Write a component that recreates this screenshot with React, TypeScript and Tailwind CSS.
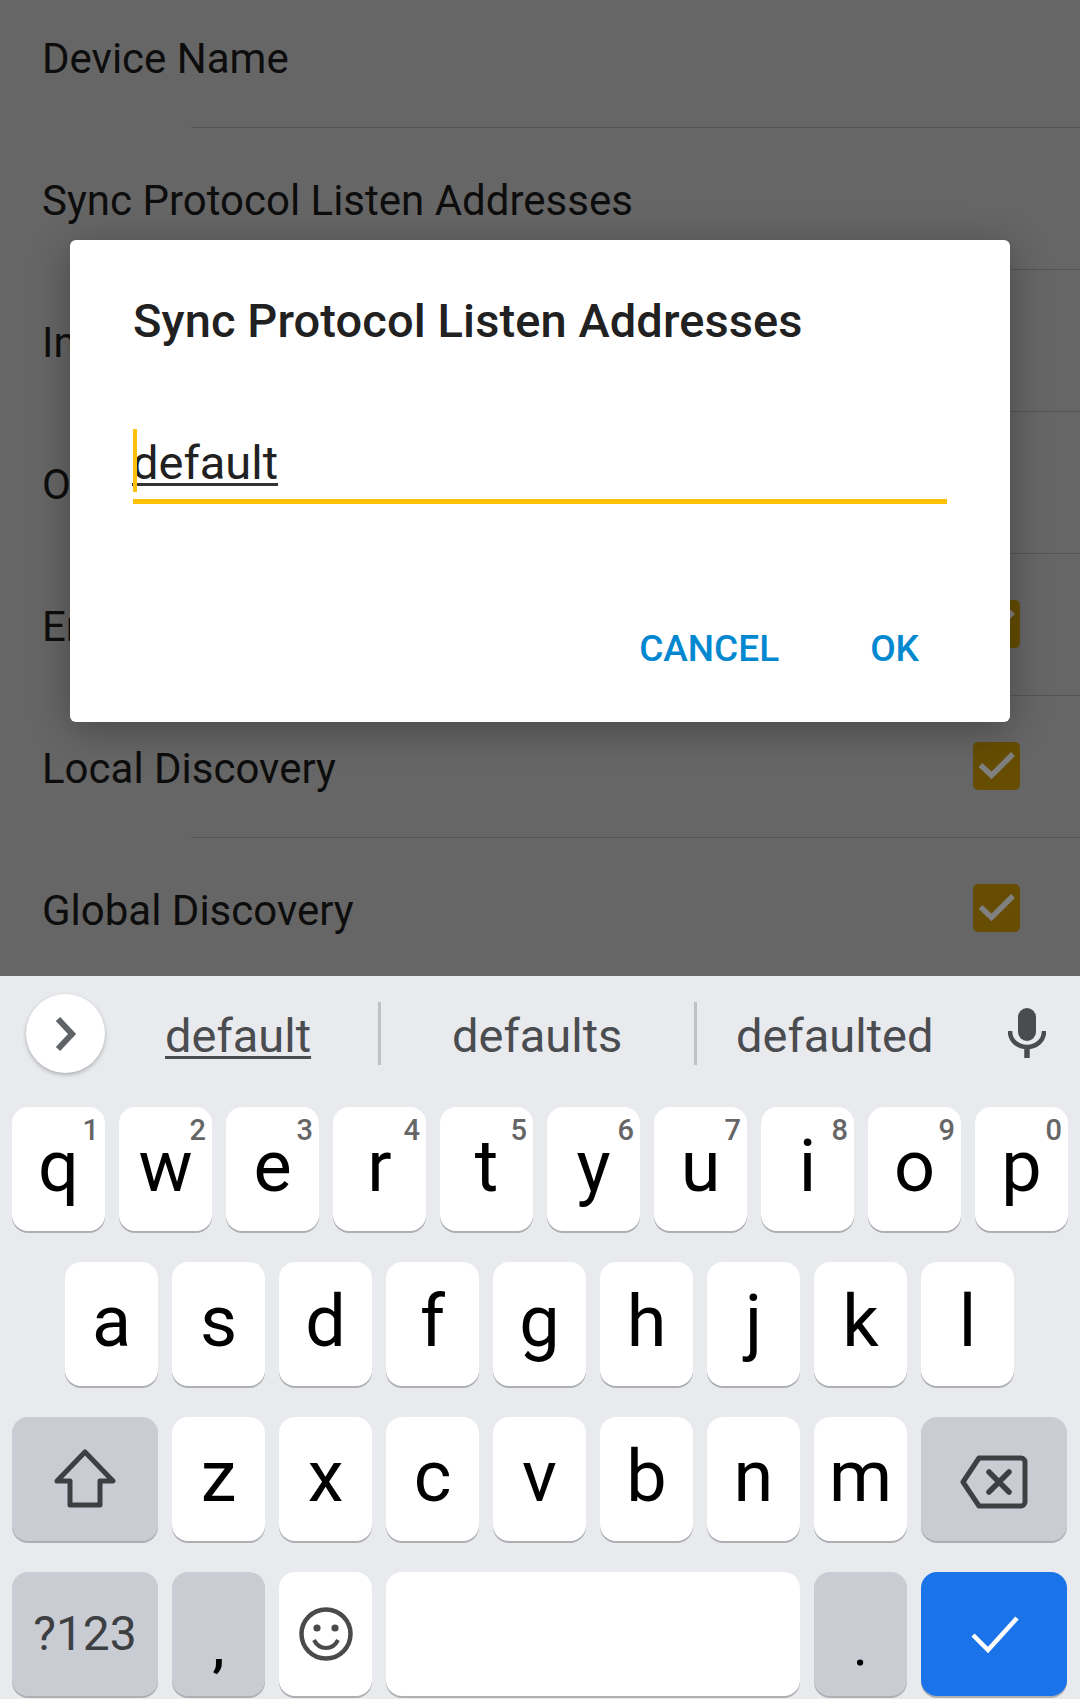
const settings = [
  { label: "Device Name" },
  { label: "Sync Protocol Listen Addresses" },
  { label: "Incoming Rate Limit" },
  { label: "Outgoing Rate Limit" },
  { label: "Enable NAT Traversal", checked: true },
  { label: "Local Discovery", checked: true },
  { label: "Global Discovery", checked: true },
];

const rowOne = [
  ["q", "1"],
  ["w", "2"],
  ["e", "3"],
  ["r", "4"],
  ["t", "5"],
  ["y", "6"],
  ["u", "7"],
  ["i", "8"],
  ["o", "9"],
  ["p", "0"],
];
const rowTwo = ["a", "s", "d", "f", "g", "h", "j", "k", "l"];
const rowThree = ["z", "x", "c", "v", "b", "n", "m"];

const keyBase = "flex h-[124px] items-center justify-center rounded-[16px] shadow-[0_2px_0_#adafb3]";

const LetterKey = ({ letter, hint }: { letter: string; hint?: string }) => (
  <div className={`${keyBase} relative w-[93px] bg-white pb-[4px] text-[72px] leading-none text-black`}>
    {letter}
    {hint && (
      <span className="absolute right-[6px] top-[7px] text-[29px] leading-[32px] font-medium text-[#666666]">{hint}</span>
    )}
  </div>
);

const Checkbox = () => (
  <div className="-mt-[6px] h-[48px] w-[47px] rounded-[5px] bg-[#664d03]">
    <svg width="47" height="48" viewBox="0 0 47 48" fill="none">
      <path d="M7.5 23L18.5 33.5L40 12" stroke="#808080" strokeWidth="5.5" />
    </svg>
  </div>
);

export default function App() {
  return (
    <div className="h-[1699px] w-[1080px] overflow-hidden bg-[#e8eaed] font-['Roboto',sans-serif]">
      <div className="relative h-[976px] overflow-hidden bg-[#666666]">
        <div className="-mt-[14px]">
          {settings.map((s) => (
            <div key={s.label}>
              <div className="flex h-[141px] items-center justify-between pl-[42px] pr-[60px] pt-[4px] text-[42px] text-[#0d0d0d]">
                <span>{s.label}</span>
                {s.checked && <Checkbox />}
              </div>
              <div className="ml-[191px] h-px bg-[#555555]" />
            </div>
          ))}
        </div>

        {/* dialog */}
        <div className="absolute left-[70px] top-[240px] flex h-[482px] w-[940px] flex-col rounded-[6px] bg-white pl-[63px] pr-[63px] shadow-[0_8px_40px_rgba(0,0,0,0.3)]">
          <div className="mt-[53px] text-[47px] leading-[56px] tracking-[0.1px] font-medium text-[#212121]">Sync Protocol Listen Addresses</div>
          <div className="relative mt-[80px] h-[75px] border-b-[5px] border-[#ffc107]">
            <span className="absolute left-[-1px] top-[6px] text-[47px] leading-[56px] text-[#212121] underline decoration-[#333333] decoration-[3px] underline-offset-[4px]">default</span>
            <div className="absolute left-0 top-0 h-[63px] w-[4px] bg-[#ffc107]" />
          </div>
          <div className="mt-[123px] flex justify-end gap-[91px] pr-[28px] text-[37px] leading-[44px] font-medium text-[#0288d1]">
            <span>CANCEL</span>
            <span>OK</span>
          </div>
        </div>
      </div>

      {/* keyboard */}
      <div className="h-[723px]">
        <div className="relative flex h-[131px] items-center text-[47px] leading-[60px] text-[#4a4c50]">
          <div className="absolute left-[26px] top-[18px] flex h-[79px] w-[79px] items-center justify-center rounded-full bg-white shadow-[0_2px_4px_rgba(0,0,0,0.25)]">
            <svg width="24" height="36" viewBox="0 0 24 36" fill="none">
              <path d="M4 3l14 15L4 33" stroke="#5f6368" strokeWidth="6" />
            </svg>
          </div>
          <div className="absolute left-[165px] top-[30px] underline decoration-[3px] underline-offset-[4px]">default</div>
          <div className="absolute left-[378px] top-[26px] h-[63px] w-[3px] bg-[#bfc1c5]" />
          <div className="absolute left-[452px] top-[30px]">defaults</div>
          <div className="absolute left-[694px] top-[26px] h-[63px] w-[3px] bg-[#bfc1c5]" />
          <div className="absolute left-[736px] top-[30px]">defaulted</div>
          <svg className="absolute left-[1008px] top-[32px]" width="38" height="50" viewBox="0 0 38 50" fill="none">
            <rect x="10" y="0" width="18" height="33" rx="9" fill="#4a4c50" />
            <path d="M2 23c0 10 8 16 17 16s17-6 17-16" stroke="#4a4c50" strokeWidth="4.5" />
            <path d="M19 38v12" stroke="#4a4c50" strokeWidth="5.5" />
          </svg>
        </div>

        <div className="flex flex-col gap-[31px]">
          <div className="flex gap-[14px] pl-[12px]">
            {rowOne.map(([k, n]) => (
              <LetterKey key={k} letter={k} hint={n} />
            ))}
          </div>
          <div className="flex gap-[14px] pl-[65px]">
            {rowTwo.map((k) => (
              <LetterKey key={k} letter={k} />
            ))}
          </div>
          <div className="flex gap-[14px] pl-[12px]">
            <div className={`${keyBase} w-[146px] bg-[#caccd4]`}>
              <svg width="62" height="60" viewBox="0 0 62 60" fill="none">
                <path d="M31 3L59 32H46V56H16V32H3Z" stroke="#3c4043" strokeWidth="5" strokeLinejoin="round" />
              </svg>
            </div>
            {rowThree.map((k) => (
              <LetterKey key={k} letter={k} />
            ))}
            <div className={`${keyBase} w-[146px] bg-[#caccd4] pt-[5px]`}>
              <svg width="68" height="56" viewBox="0 0 68 56" fill="none">
                <path d="M19 4H61a4 4 0 0 1 4 4V48a4 4 0 0 1-4 4H19L3 28Z" stroke="#3c4043" strokeWidth="5" strokeLinejoin="round" />
                <path d="M29 18L49 38M49 18L29 38" stroke="#3c4043" strokeWidth="5.5" strokeLinecap="round" />
              </svg>
            </div>
          </div>
          <div className="flex gap-[14px] pl-[12px]">
            <div className={`${keyBase} w-[146px] bg-[#caccd4] text-[48px] text-[#3c4043]`}>?123</div>
            <div className={`${keyBase} w-[93px] items-end bg-[#caccd4] pb-[22px] text-[56px] leading-none font-medium text-black`}>,</div>
            <div className={`${keyBase} w-[93px] bg-white`}>
              <svg width="54" height="54" viewBox="0 0 54 54" fill="none">
                <circle cx="27" cy="27" r="24.5" stroke="#4a4a4a" strokeWidth="4.5" />
                <circle cx="18" cy="21" r="3.6" fill="#4a4a4a" />
                <circle cx="36" cy="21" r="3.6" fill="#4a4a4a" />
                <path d="M15 33c3 6 8 8 12 8s9-2 12-8" stroke="#4a4a4a" strokeWidth="4" />
              </svg>
            </div>
            <div className={`${keyBase} w-[414px] bg-white`} />
            <div className={`${keyBase} w-[93px] items-end bg-[#caccd4] pb-[22px] text-[56px] leading-none text-black`}>.</div>
            <div className={`${keyBase} w-[146px] bg-[#1a73e8] pl-[2px]`}>
              <svg width="48" height="38" viewBox="0 0 48 38" fill="none">
                <path d="M2 20l15 15L46 3" stroke="#ffffff" strokeWidth="4.5" />
              </svg>
            </div>
          </div>
        </div>
      </div>
    </div>
  );
}
